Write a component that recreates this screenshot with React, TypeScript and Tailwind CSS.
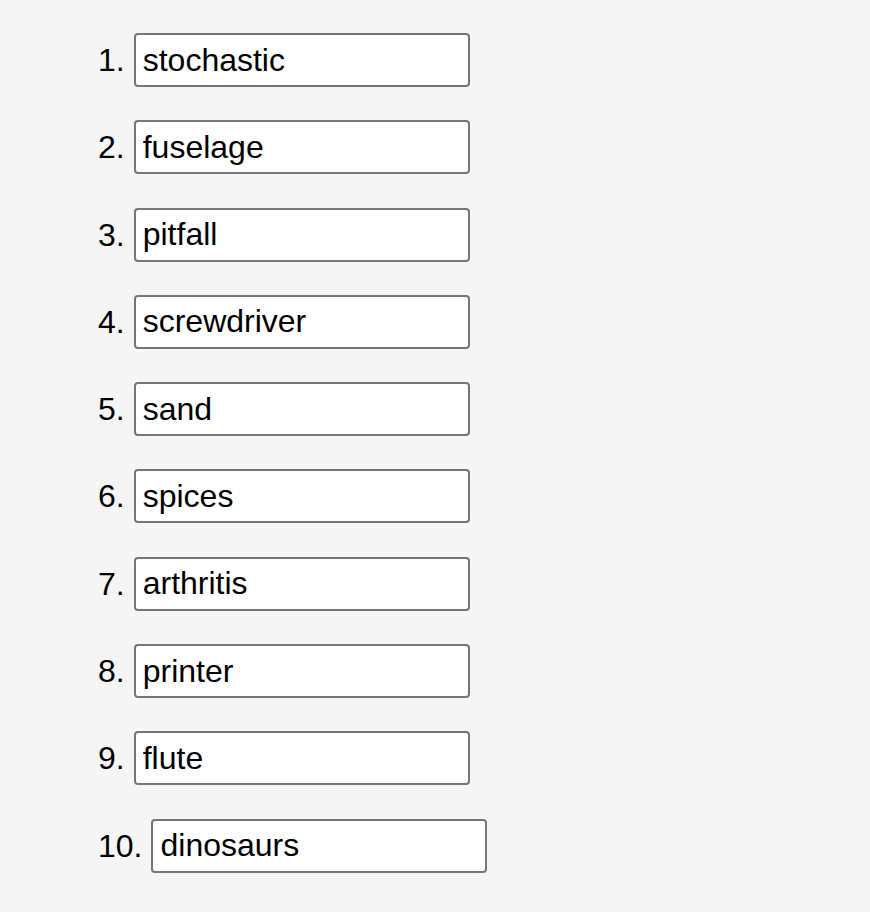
import React from "react";

const words = [
  "stochastic",
  "fuselage",
  "pitfall",
  "screwdriver",
  "sand",
  "spices",
  "arthritis",
  "printer",
  "flute",
  "dinosaurs",
];

export default function App() {
  return (
    <div className="min-h-[912px] w-full bg-[#f5f5f5] pl-[98px] pt-[33px] font-['Liberation_Sans',Arial,sans-serif] text-black">
      <ol className="flex flex-col gap-[33.3px]">
        {words.map((w, i) => (
          <li key={w} className="flex items-center gap-[9px] text-[32px] leading-none">
            <span>{i + 1}.</span>
            <input
              defaultValue={w}
              className="h-[54px] w-[336px] rounded-[4px] border-2 border-[#767676] bg-white px-[7px] text-[32px] text-black outline-none"
            />
          </li>
        ))}
      </ol>
    </div>
  );
}
